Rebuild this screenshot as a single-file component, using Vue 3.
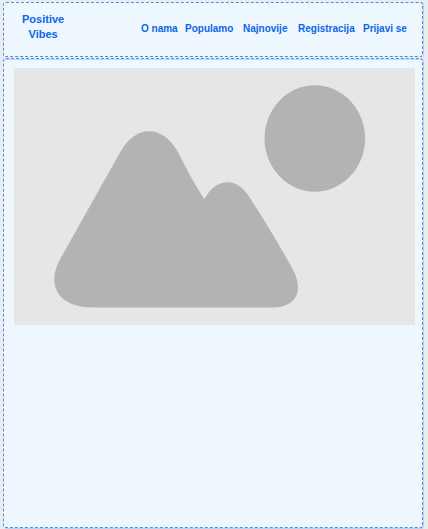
<script setup>
const brand = ['Positive', 'Vibes']
const links = [
  { label: 'O nama', href: '#o-nama' },
  { label: 'Populamo', href: '#populamo' },
  { label: 'Najnovije', href: '#najnovije' },
  { label: 'Registracija', href: '#registracija' },
  { label: 'Prijavi se', href: '#prijavi-se' },
]
</script>

<template>
  <div class="page">
    <header class="panel header">
      <a class="brand" href="#">
        <span v-for="word in brand" :key="word">{{ word }}</span>
      </a>
      <nav class="nav">
        <a v-for="link in links" :key="link.href" :href="link.href">{{ link.label }}</a>
      </nav>
    </header>
    <main class="panel content">
      <svg class="placeholder" viewBox="0 0 401 257" aria-hidden="true">
        <rect width="401" height="257" fill="#e6e6e6" />
        <ellipse cx="300.800" cy="70.500" rx="50.300" ry="53.200" fill="#b3b3b3" />
        <path
          fill="#b3b3b3"
          d="M106 84.500C121.500 57 148 55.500 164.500 85C173 102 181 117 190.300 131C202 109.500 222 109 234 127C251 153 266 178 280 203.500C289 223 283 239.500 257 239.500H79C43 239.500 32 216 46.500 190.500Z"
        />
      </svg>
    </main>
  </div>
</template>

<style>
body {
  margin: 0;
  background: #ececec;
}
</style>

<style scoped>
.page {
  box-sizing: border-box;
  min-height: 100vh;
  display: flex;
  flex-direction: column;
  gap: 1px;
  padding: 2px 5px 1px 3px;
  font-family: "Liberation Sans", Arial, sans-serif;
  font-weight: 700;
}

.panel {
  border: 1px dashed #4a90e2;
  border-radius: 3px;
  background: #eef6fe;
  box-shadow: 1px 0 0 #b4d0f2;
}

.header {
  display: flex;
  justify-content: space-between;
  padding: 9px 9px 14px 18px;
}

a {
  color: #0a66e6;
  text-decoration: none;
}

.brand {
  display: flex;
  flex-direction: column;
  align-items: center;
  font-size: 11px;
  line-height: 15px;
}

.nav {
  flex: 0 1 272px;
  display: grid;
  grid-template-columns: 44fr 58fr 55fr 65fr 50fr;
  align-items: center;
  padding-top: 4px;
  font-size: 10px;
  line-height: 12px;
  white-space: nowrap;
}

.content {
  flex: 1;
  padding: 9px 7px 9px 10px;
  box-shadow: 1px 1px 0 #b4d0f2, inset 0 1px 0 #bdd9fa;
}

.placeholder {
  display: block;
  width: 100%;
  height: auto;
}
</style>
